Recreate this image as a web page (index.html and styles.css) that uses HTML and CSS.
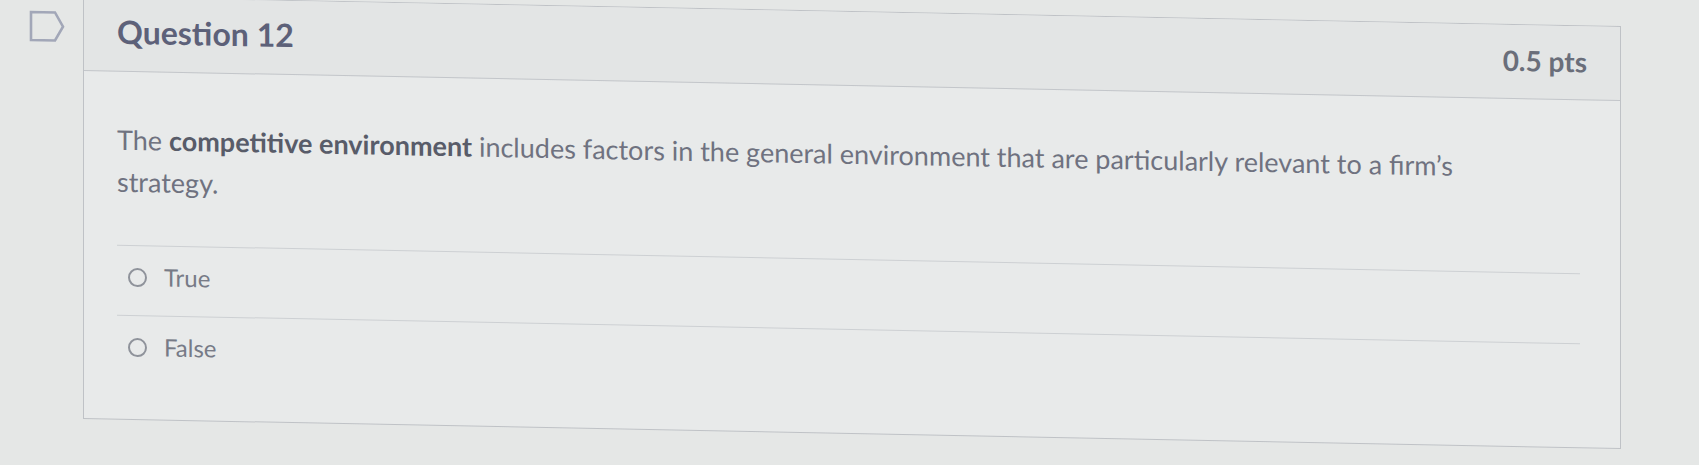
FILE: index.html
```html
<!DOCTYPE html>
<html lang="en">
<head>
<meta charset="utf-8">
<title>Question 12</title>
<link rel="stylesheet" href="styles.css">
</head>
<body>
<div class="page">
  <div class="gutter">
    <svg class="flag" width="36" height="32" viewBox="0 0 36 32" aria-hidden="true">
      <polygon points="2,2 26,2 34,16 26,30 2,30" fill="none" stroke="#a2a7b8" stroke-width="2.6" stroke-linejoin="miter"/>
    </svg>
  </div>
  <div class="card">
    <div class="card-header">
      <h2 class="q-title">Question 12</h2>
      <span class="q-pts">0.5 pts</span>
    </div>
    <div class="card-body">
      <p class="q-text">The <strong>competitive environment</strong> includes factors in the general environment that are particularly relevant to a firm’s strategy.</p>
      <div class="answers">
        <label class="answer"><span class="radio"></span><span class="answer-label">True</span></label>
        <label class="answer"><span class="radio"></span><span class="answer-label">False</span></label>
      </div>
    </div>
  </div>
</div>
</body>
</html>
```

FILE: styles.css
```css
html, body {
  margin: 0;
  padding: 0;
  background: #e5e7e6;
  height: 100%;
  overflow: hidden;
}

body {
  font-family: Lato, "Noto Sans", "Liberation Sans", sans-serif;
}

.page {
  display: flex;
  align-items: flex-start;
  transform: skewY(1.12deg);
  transform-origin: 83px 0;
}

.gutter {
  flex: none;
  width: 83px;
  padding: 11px 0 0 29px;
  box-sizing: border-box;
}

.flag {
  display: block;
}

.card {
  flex: none;
  width: 1538px;
  margin-top: -4px;
  box-sizing: border-box;
  border: 1.5px solid #bfc2c6;
  background: #e8eaea;
}

.card-header {
  display: flex;
  justify-content: space-between;
  align-items: baseline;
  height: 74px;
  box-sizing: border-box;
  padding: 15px 33px 0 33px;
  background: #e3e5e5;
  border-bottom: 1.5px solid #c3c6ca;
}

.q-title {
  margin: 0;
  font-size: 32px;
  line-height: 38px;
  font-weight: 700;
  color: #5d6179;
}

.q-pts {
  font-size: 28px;
  line-height: 38px;
  font-weight: 700;
  color: #6a6e7a;
}

.card-body {
  padding: 47px 40px 34px 33px;
}

.q-text {
  margin: 0;
  max-width: 1400px;
  font-size: 27px;
  line-height: 42px;
  color: #6f7280;
}

.q-text strong {
  font-weight: 700;
  color: #585c69;
}

.answers {
  margin-top: 42px;
  display: flex;
  flex-direction: column;
}

.answer {
  display: flex;
  align-items: center;
  border-top: 1.5px solid #cdd0d3;
  padding: 17px 0 24px 11px;
  height: 28px;
}

.radio {
  flex: none;
  width: 15px;
  height: 15px;
  border: 2px solid #8f939b;
  border-radius: 50%;
  margin-right: 17px;
}

.answer-label {
  font-size: 24px;
  line-height: 28px;
  color: #777b87;
}
```
